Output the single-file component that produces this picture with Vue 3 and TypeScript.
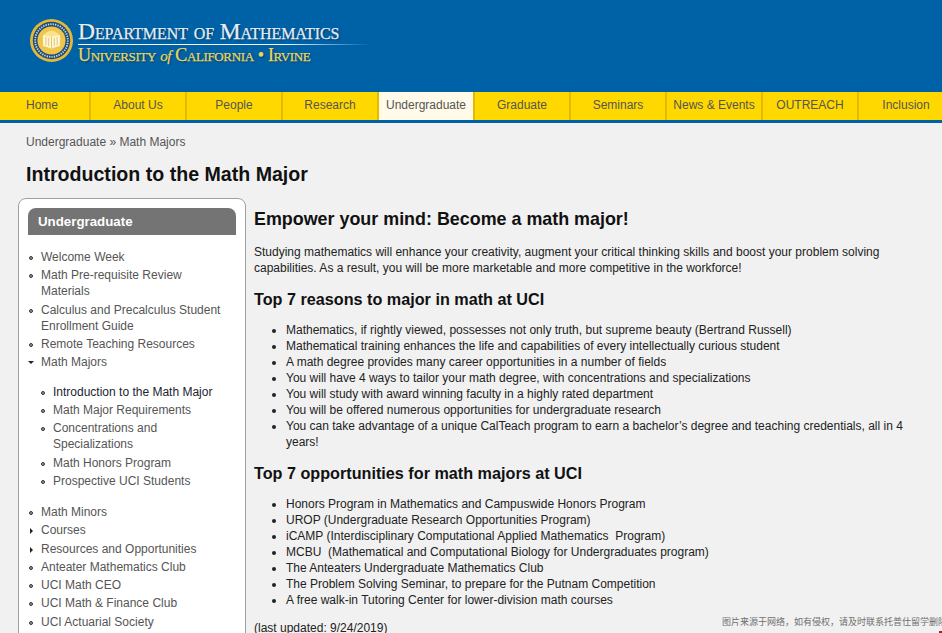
<script setup lang="ts">
interface NavItem {
  label: string
  active?: boolean
}
interface SideItem {
  label: string
  marker?: 'open' | 'closed'
  current?: boolean
  children?: SideItem[]
}

const navItems: NavItem[] = [
  { label: 'Home' },
  { label: 'About Us' },
  { label: 'People' },
  { label: 'Research' },
  { label: 'Undergraduate', active: true },
  { label: 'Graduate' },
  { label: 'Seminars' },
  { label: 'News & Events' },
  { label: 'OUTREACH' },
  { label: 'Inclusion' },
]

const sideItems: SideItem[] = [
  { label: 'Welcome Week' },
  { label: 'Math Pre-requisite Review Materials' },
  { label: 'Calculus and Precalculus Student Enrollment Guide' },
  { label: 'Remote Teaching Resources' },
  {
    label: 'Math Majors',
    marker: 'open',
    children: [
      { label: 'Introduction to the Math Major', current: true },
      { label: 'Math Major Requirements' },
      { label: 'Concentrations and Specializations' },
      { label: 'Math Honors Program' },
      { label: 'Prospective UCI Students' },
    ],
  },
  { label: 'Math Minors' },
  { label: 'Courses', marker: 'closed' },
  { label: 'Resources and Opportunities', marker: 'closed' },
  { label: 'Anteater Mathematics Club' },
  { label: 'UCI Math CEO' },
  { label: 'UCI Math & Finance Club' },
  { label: 'UCI Actuarial Society' },
]

const reasons = [
  'Mathematics, if rightly viewed, possesses not only truth, but supreme beauty (Bertrand Russell)',
  'Mathematical training enhances the life and capabilities of every intellectually curious student',
  'A math degree provides many career opportunities in a number of fields',
  'You will have 4 ways to tailor your math degree, with concentrations and specializations',
  'You will study with award winning faculty in a highly rated department',
  'You will be offered numerous opportunities for undergraduate research',
  'You can take advantage of a unique CalTeach program to earn a bachelor\u2019s degree and teaching credentials, all in 4 years!',
]

const opportunities = [
  'Honors Program in Mathematics and Campuswide Honors Program',
  'UROP (Undergraduate Research Opportunities Program)',
  'iCAMP (Interdisciplinary Computational Applied Mathematics\u00a0 Program)',
  'MCBU\u00a0 (Mathematical and Computational Biology for Undergraduates program)',
  'The Anteaters Undergraduate Mathematics Club',
  'The Problem Solving Seminar, to prepare for the Putnam Competition',
  'A free walk-in Tutoring Center for lower-division math courses',
]
</script>

<template>
  <div class="page">
    <header class="banner">
      <svg class="seal" width="43" height="43" viewBox="0 0 46 46" aria-hidden="true">
        <circle cx="23" cy="23" r="23" fill="#e2b93a" />
        <circle cx="23" cy="23" r="20" fill="#1f4d78" />
        <circle cx="23" cy="23" r="17.5" fill="none" stroke="#cfd9dd" stroke-width="2" stroke-dasharray="1.4 1.2" />
        <circle cx="23" cy="23" r="15" fill="#efc64c" />
        <circle cx="23" cy="22" r="9.5" fill="#fbe28e" />
        <path d="M14 17l9 2 9-2v12l-9 2-9-2z" fill="#fff6d8" />
        <path d="M23 19v12M17 19v9M20 20v9M26 20v9M29 19v9" stroke="#d9ae3c" stroke-width="0.7" fill="none" />
      </svg>
      <div class="wordmark">
        <div class="dept">Department of Mathematics</div>
        <div class="rule"></div>
        <div class="univ">University <i>of</i> California &bull; Irvine</div>
      </div>
    </header>

    <nav class="nav">
      <a v-for="item in navItems" :key="item.label" class="nav-item" :class="{ active: item.active }">{{ item.label }}</a>
    </nav>

    <div class="body">
      <div class="crumbs">Undergraduate &raquo; Math Majors</div>
      <h1 class="title">Introduction to the Math Major</h1>

      <div class="columns">
        <aside class="sidebar">
          <h2 class="side-head">Undergraduate</h2>
          <ul class="side-list">
            <li v-for="item in sideItems" :key="item.label" class="side-item" :class="item.marker">
              <a :class="{ current: item.current }">{{ item.label }}</a>
              <ul v-if="item.children" class="side-sub">
                <li v-for="sub in item.children" :key="sub.label" class="side-item">
                  <a :class="{ current: sub.current }">{{ sub.label }}</a>
                </li>
              </ul>
            </li>
          </ul>
        </aside>

        <main class="content">
          <h2 class="lead">Empower your mind: Become a math major!</h2>
          <p class="intro">
            Studying mathematics will enhance your creativity, augment your critical thinking skills and boost your problem solving capabilities. As a result, you will be more marketable and more competitive in the workforce!
          </p>
          <h3 class="sub">Top 7 reasons to major in math at UCI</h3>
          <ul class="bullets">
            <li v-for="r in reasons" :key="r">{{ r }}</li>
          </ul>
          <h3 class="sub">Top 7 opportunities for math majors at UCI</h3>
          <ul class="bullets">
            <li v-for="o in opportunities" :key="o">{{ o }}</li>
          </ul>
          <p class="updated">(last updated: 9/24/2019)</p>
        </main>
      </div>
    </div>

    <div class="watermark">图片来源于网络，如有侵权，请及时联系托普仕留学删除</div>
    <div class="stamp"></div>
  </div>
</template>

<style>
html,
body {
  margin: 0;
  height: 100%;
  overflow: hidden;
  background: #f1f1f1;
}
</style>

<style scoped>
.page {
  position: relative;
  width: 942px;
  height: 633px;
  overflow: hidden;
  background: #f1f1f1;
  font-family: "Liberation Sans", Arial, sans-serif;
  font-size: 12px;
  line-height: 16px;
  color: #222;
}

.banner {
  height: 92px;
  box-sizing: border-box;
  background: #0062a6;
  display: flex;
  align-items: flex-start;
  padding: 19px 0 0 30px;
  gap: 5px;
}

.seal {
  flex: none;
}

.wordmark {
  font-family: "Liberation Serif", "Times New Roman", serif;
  font-variant: small-caps;
  text-shadow: 1px 1px 2px rgba(0, 30, 70, 0.7);
  -webkit-text-stroke: 0.25px currentColor;
  width: 292px;
}

.dept {
  font-size: 23.5px;
  line-height: 25px;
  letter-spacing: -0.07px;
  color: #e6edf3;
  white-space: nowrap;
}

.rule {
  height: 1px;
  background: linear-gradient(to right, #fff 0, #fff 70%, rgba(255, 255, 255, 0) 100%);
}

.univ {
  font-size: 18px;
  line-height: 21px;
  letter-spacing: -0.36px;
  color: #e8d95f;
  white-space: nowrap;
}

.univ i {
  font-variant: normal;
  font-size: 15px;
}

.nav {
  display: flex;
  height: 28px;
  margin-left: -5px;
  border-bottom: 3px solid #0062a6;
  background: #ffd800;
}

.nav-item {
  flex: none;
  width: 94px;
  border-right: 2px solid #e6b800;
  text-align: center;
  line-height: 26px;
  color: #555;
  white-space: nowrap;
}

.nav-item.active {
  background: #fffbe8;
}

.body {
  padding: 11px 0 0 26px;
}

.crumbs {
  color: #555;
}

.title {
  margin: 12px 0 0;
  font-size: 19.6px;
  line-height: 24px;
  color: #111;
}

.columns {
  display: flex;
  margin: 12px 0 0 -8px;
  gap: 8px;
}

.sidebar {
  flex: none;
  width: 228px;
  height: 480px;
  box-sizing: border-box;
  padding: 9px 9px 0;
  background: #fff;
  border: 1px solid #a0a0a0;
  border-radius: 8px 8px 0 0;
}

.side-head {
  margin: 0;
  height: 27px;
  padding-left: 10px;
  background: #747474;
  border-radius: 8px 8px 0 0;
  color: #fff;
  font-size: 13.3px;
  line-height: 27px;
}

.side-list,
.side-sub {
  list-style: none;
  margin: 0;
  padding: 0;
}

.side-list {
  padding: 14px 10px 0 13px;
  color: #555;
}

.side-sub {
  padding: 13.5px 0 10.5px 12px;
}

.side-item {
  position: relative;
  padding-bottom: 2.3px;
}

.side-item::before {
  content: "";
  position: absolute;
  left: -12px;
  top: 7px;
  width: 4px;
  height: 4px;
  box-sizing: border-box;
  border: 1px solid #333;
  border-radius: 50%;
  background: #999;
}

.side-item.open::before {
  left: -13px;
  top: 7px;
  width: 0;
  height: 0;
  border: 3px solid transparent;
  border-top: 3px solid #222;
  border-bottom: 0;
  border-radius: 0;
  background: none;
}

.side-item.closed::before {
  left: -11px;
  top: 6px;
  width: 0;
  height: 0;
  border: 3px solid transparent;
  border-left: 3px solid #222;
  border-right: 0;
  border-radius: 0;
  background: none;
}

.current {
  color: #1c2430;
}

.content {
  flex: 1;
  min-width: 0;
  padding-right: 26px;
}

.lead {
  margin: 9px 0 0;
  font-size: 17.9px;
  line-height: 24px;
  color: #111;
}

.intro {
  margin: 13px 0 0;
}

.sub {
  margin: 13px 0 0;
  font-size: 16.2px;
  line-height: 20px;
  color: #111;
}

.bullets {
  margin: 13px 0 0;
  padding: 0 0 0 32px;
}

.updated {
  margin: 12px 0 0;
}

.watermark {
  position: absolute;
  left: 722px;
  top: 615px;
  font-family: "Noto Sans CJK SC", sans-serif;
  font-size: 9px;
  line-height: 14px;
  color: #6f6f6f;
  white-space: nowrap;
}

.stamp {
  position: absolute;
  right: 0;
  bottom: 0;
  width: 3px;
  height: 2px;
  background: #c8101a;
}
</style>
